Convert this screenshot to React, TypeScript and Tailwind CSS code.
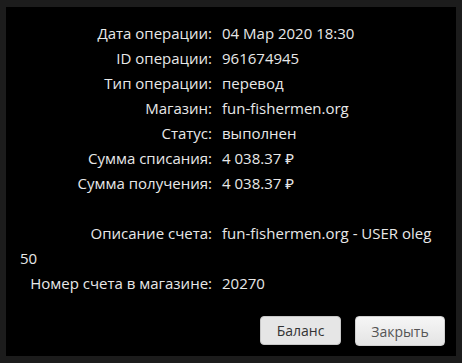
import React from 'react';

const rows: [string, string][] = [
  ['Дата операции:', '04 Мар 2020 18:30'],
  ['ID операции:', '961674945'],
  ['Тип операции:', 'перевод'],
  ['Магазин:', 'fun-fishermen.org'],
  ['Статус:', 'выполнен'],
  ['Сумма списания:', '4 038.37 ₽'],
  ['Сумма получения:', '4 038.37 ₽'],
];

function Row({ label, value }: { label: string; value: string }) {
  return (
    <div className="leading-[25px]">
      <span className="inline-block w-[192px] text-right">{label}</span>
      <span className="ml-[10px]">{value}</span>
    </div>
  );
}

export default function App() {
  return (
    <div className="w-[462px] h-[363px] bg-[#1c1c1c] px-[6px] pt-[7px] pb-[7px]">
      <div className="h-full bg-black flex flex-col pt-[14px] pl-[14px] pr-[14px] text-[#e8e8e8] text-[15px] font-['Open_Sans','Noto_Sans',sans-serif]">
        {rows.map(([l, v]) => (
          <Row key={l} label={l} value={v} />
        ))}
        <div className="h-[25px]" />
        <Row label="Описание счета:" value="fun-fishermen.org - USER oleg 50" />
        <Row label="Номер счета в магазине:" value="20270" />
        <div className="flex justify-end gap-[14px] mt-[20px] -mr-[3px] font-['Open_Sans',sans-serif] text-[14px]">
          <button className="w-[81px] h-[29px] rounded-[4px] border border-[#c8c8c8] bg-[#e6e6e6] text-[#333]">
            Баланс
          </button>
          <button className="w-[90px] h-[30px] rounded-[4px] border border-[#d0d0d0] bg-gradient-to-b from-[#f6f6f6] to-[#e4e4e4] text-[#555]">
            Закрыть
          </button>
        </div>
      </div>
    </div>
  );
}
